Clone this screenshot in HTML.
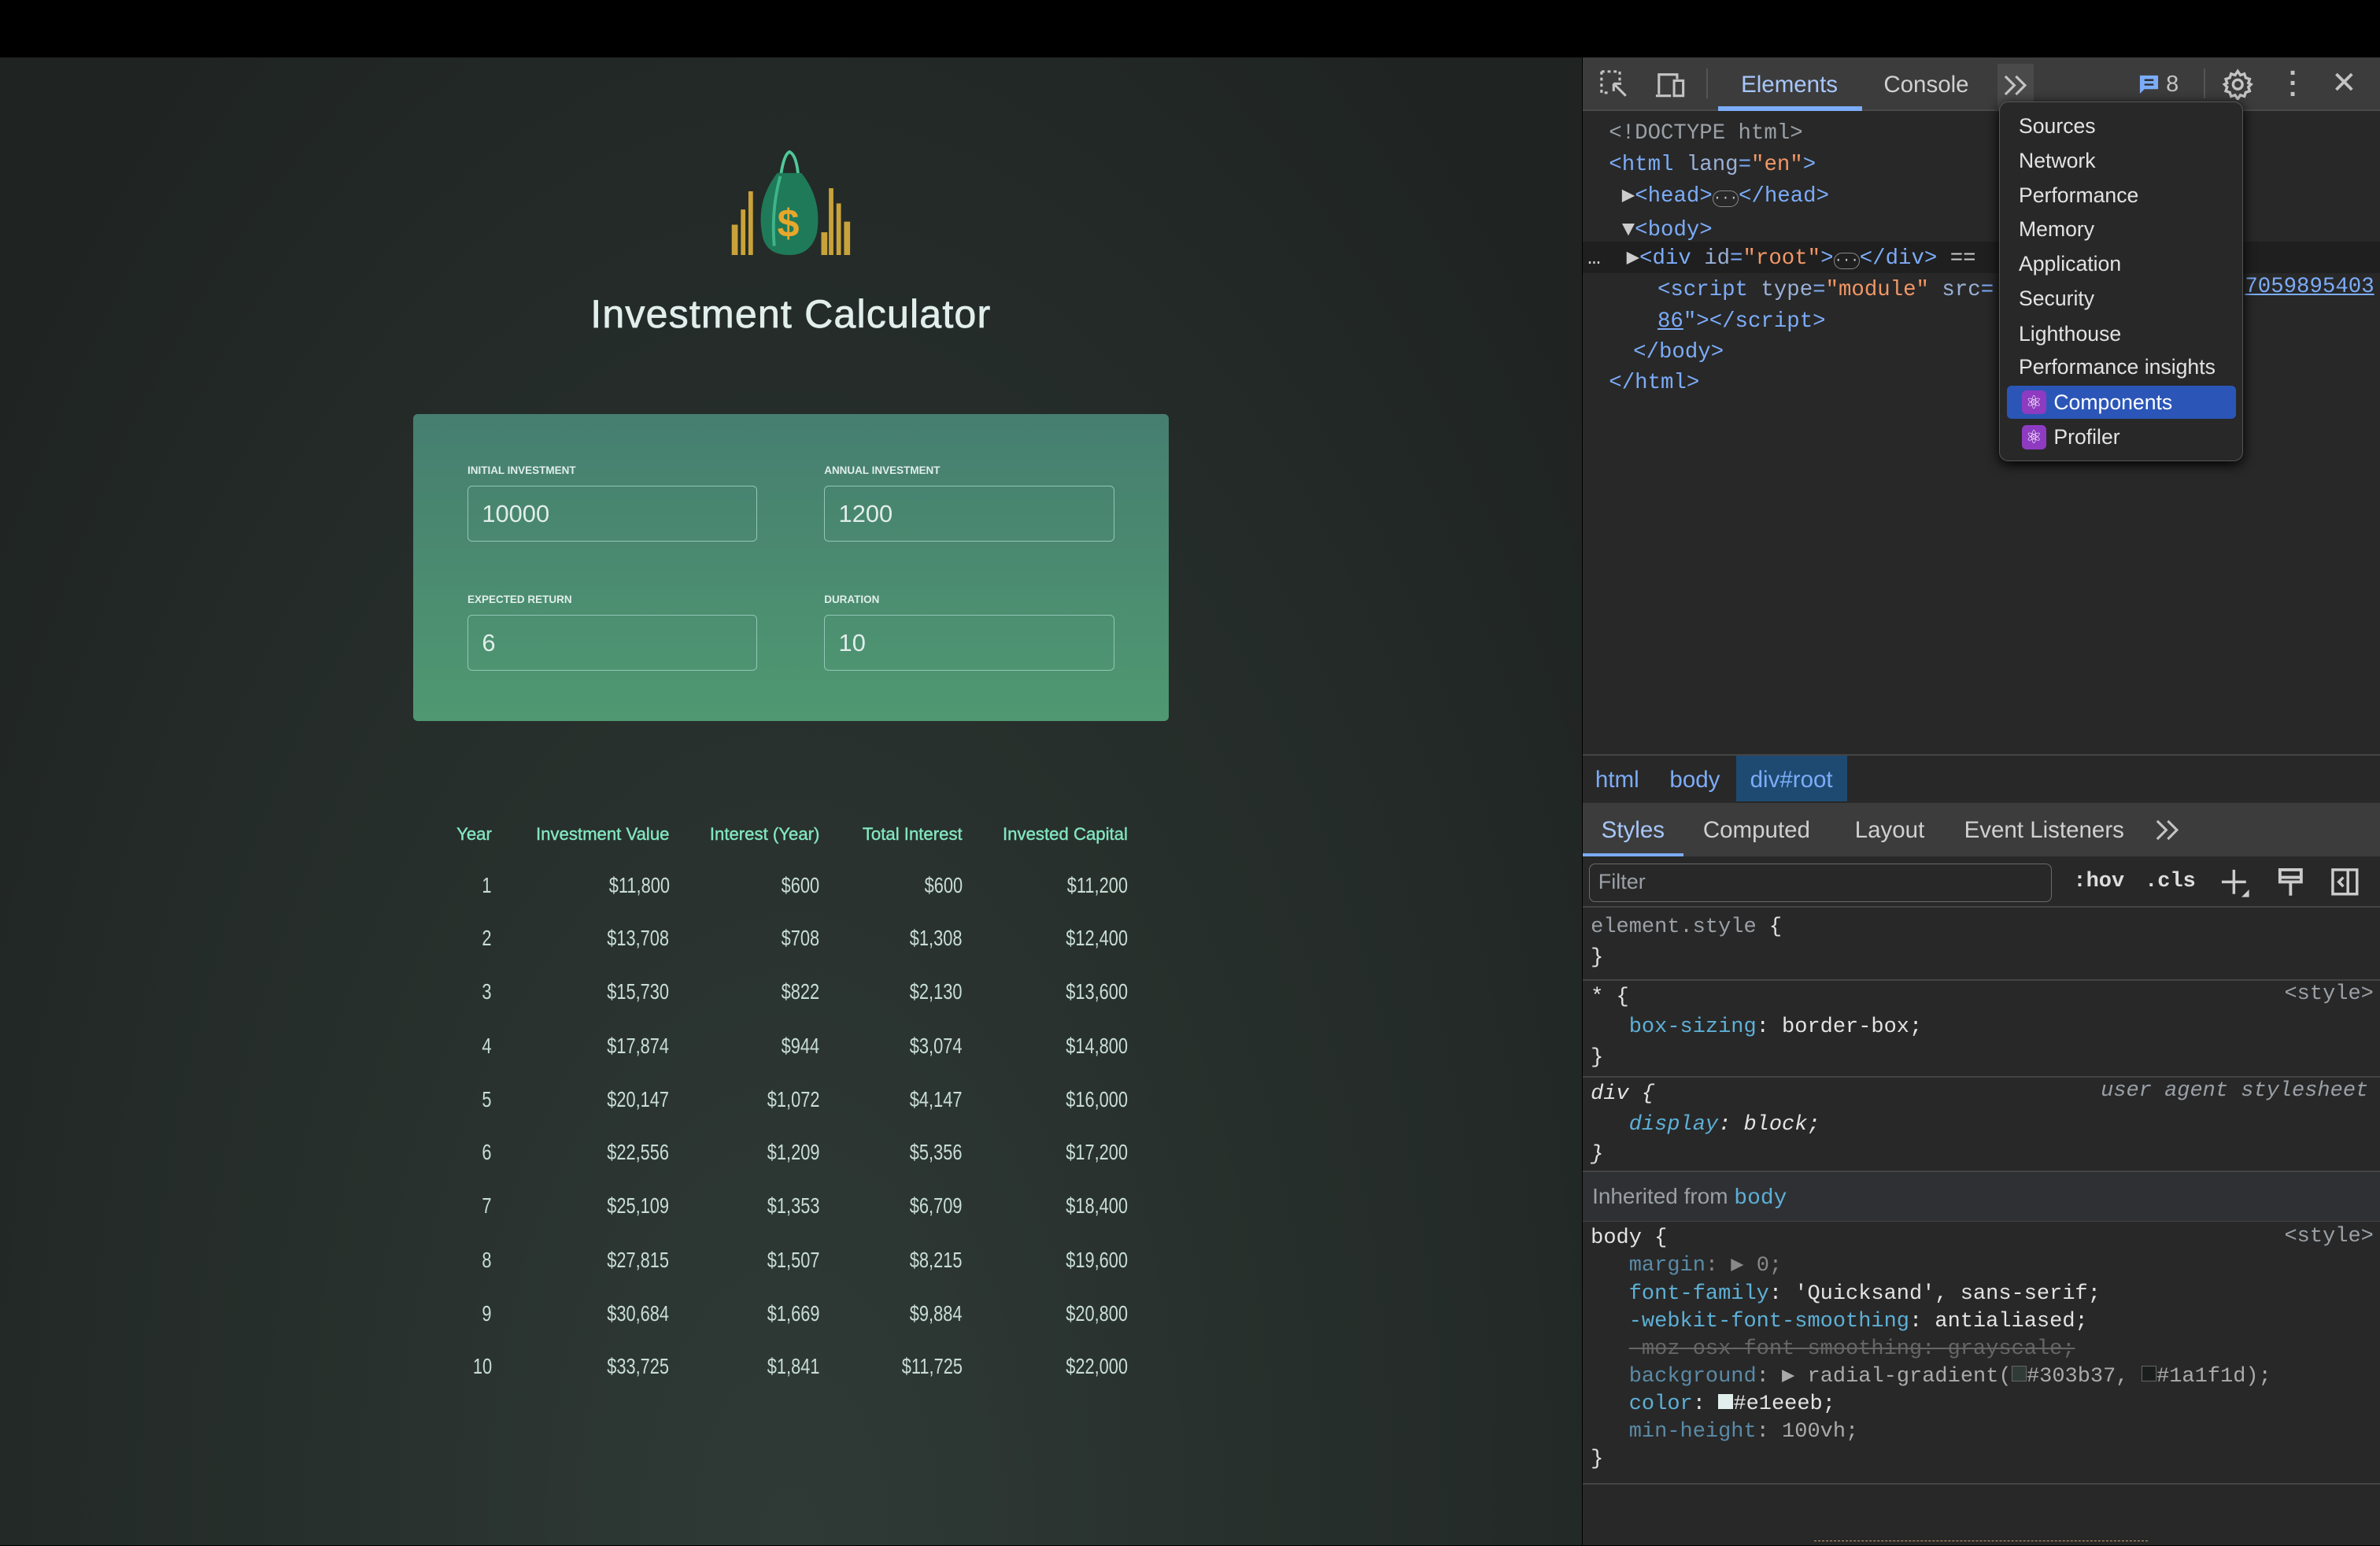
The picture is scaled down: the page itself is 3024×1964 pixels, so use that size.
<!DOCTYPE html>
<html><head><meta charset="utf-8">
<style>
html,body{margin:0;padding:0;background:#000;}
body{width:3024px;height:1964px;overflow:hidden;}
#w{zoom:1.92857;width:1568px;height:1018px;position:relative;font-family:"Liberation Sans",sans-serif;}
.a{position:absolute;}
#page{left:0;top:38px;width:1042px;height:980px;background:radial-gradient(ellipse at 50% 100%,#2f3a36,#1f2422 90%);}
.title{left:0;width:1042px;top:192px;text-align:center;color:#e1eeeb;font-size:26px;font-weight:normal;letter-spacing:0.6px;-webkit-text-stroke:0.4px #e1eeeb;}
.card{left:272px;top:273px;width:498px;height:202px;border-radius:3px;background:linear-gradient(180deg,#467e70,#4f9871);}
.lbl{font-size:7px;font-weight:bold;color:#e1eeeb;letter-spacing:0;}
.inp{width:191px;height:37px;border:1px solid #93c7b7;border-radius:3px;box-sizing:border-box;color:#e1eeeb;font-size:16px;padding:9px 0 0 9px;}
.th{color:#83e6c0;font-size:11.5px;top:543px;text-align:right;-webkit-text-stroke:0.2px #83e6c0;}
.td{color:#c8ddd6;font-size:14.5px;text-align:right;transform:scaleX(0.78);transform-origin:right;}
#dt{left:1043px;top:38px;width:525px;height:980px;background:#282828;}
.mono{font-family:"Liberation Mono",monospace;}
.tb{background:#3c3c3c;}
.menu{left:1317px;top:67px;width:160px;height:236px;background:#282828;border:1px solid #555;border-radius:6px;box-shadow:0 2px 8px #000;}
.mi{left:1330px;color:#e3e3e3;font-size:13.8px;}
.tag{color:#7cacf8}.atv{color:#f29766}.atn{color:#9ab0d6}
.sty{font-size:14px;color:#e3e3e3;}
.sep{left:1043px;width:525px;height:1px;background:#444;}
.prop{color:#5db0d7}
</style></head><body><div id="w">
<div class="a" id="page"></div>
<svg class="a" style="left:478px;top:98px" width="88" height="72" viewBox="0 0 88 72">
<g fill="#c9a23a"><rect x="4" y="50" width="4" height="20"/><rect x="10" y="40" width="3" height="30"/><rect x="15" y="28" width="3" height="42"/><rect x="68" y="26" width="3" height="44"/><rect x="73" y="36" width="3" height="34"/><rect x="78" y="48" width="4" height="22"/><rect x="63" y="55" width="4" height="15"/></g>
<path d="M36 20 Q38 4 42 2 Q47 4 48 20" fill="none" stroke="#4fc89a" stroke-width="2"/>
<path d="M34 16 L50 16 Q64 34 60 56 Q56 70 42 70 Q26 70 24 56 Q20 34 34 16Z" fill="#1f7a5a"/>
<path d="M36 18 Q30 40 32 64" stroke="#3fb488" stroke-width="2" fill="none"/>
<text x="34" y="58" font-size="26" font-weight="bold" fill="#e8a72a" font-family="Liberation Sans">$</text>
</svg>
<div class="a title">Investment Calculator</div>
<div class="a card"></div>
<div class="a lbl" style="left:308px;top:306px">INITIAL INVESTMENT</div>
<div class="a lbl" style="left:543px;top:306px">ANNUAL INVESTMENT</div>
<div class="a lbl" style="left:308px;top:391px">EXPECTED RETURN</div>
<div class="a lbl" style="left:543px;top:391px">DURATION</div>
<div class="a inp" style="left:308px;top:320px">10000</div>
<div class="a inp" style="left:543px;top:320px">1200</div>
<div class="a inp" style="left:308px;top:405px">6</div>
<div class="a inp" style="left:543px;top:405px">10</div>
<div class="a th" style="right:1244px">Year</div>
<div class="a th" style="right:1127px">Investment Value</div>
<div class="a th" style="right:1028px">Interest (Year)</div>
<div class="a th" style="right:934px">Total Interest</div>
<div class="a th" style="right:825px">Invested Capital</div>
<div class="a td" style="top:575px;right:1244px">1</div><div class="a td" style="top:575px;right:1127px">$11,800</div><div class="a td" style="top:575px;right:1028px">$600</div><div class="a td" style="top:575px;right:934px">$600</div><div class="a td" style="top:575px;right:825px">$11,200</div>
<div class="a td" style="top:610px;right:1244px">2</div><div class="a td" style="top:610px;right:1127px">$13,708</div><div class="a td" style="top:610px;right:1028px">$708</div><div class="a td" style="top:610px;right:934px">$1,308</div><div class="a td" style="top:610px;right:825px">$12,400</div>
<div class="a td" style="top:645px;right:1244px">3</div><div class="a td" style="top:645px;right:1127px">$15,730</div><div class="a td" style="top:645px;right:1028px">$822</div><div class="a td" style="top:645px;right:934px">$2,130</div><div class="a td" style="top:645px;right:825px">$13,600</div>
<div class="a td" style="top:681px;right:1244px">4</div><div class="a td" style="top:681px;right:1127px">$17,874</div><div class="a td" style="top:681px;right:1028px">$944</div><div class="a td" style="top:681px;right:934px">$3,074</div><div class="a td" style="top:681px;right:825px">$14,800</div>
<div class="a td" style="top:716px;right:1244px">5</div><div class="a td" style="top:716px;right:1127px">$20,147</div><div class="a td" style="top:716px;right:1028px">$1,072</div><div class="a td" style="top:716px;right:934px">$4,147</div><div class="a td" style="top:716px;right:825px">$16,000</div>
<div class="a td" style="top:751px;right:1244px">6</div><div class="a td" style="top:751px;right:1127px">$22,556</div><div class="a td" style="top:751px;right:1028px">$1,209</div><div class="a td" style="top:751px;right:934px">$5,356</div><div class="a td" style="top:751px;right:825px">$17,200</div>
<div class="a td" style="top:786px;right:1244px">7</div><div class="a td" style="top:786px;right:1127px">$25,109</div><div class="a td" style="top:786px;right:1028px">$1,353</div><div class="a td" style="top:786px;right:934px">$6,709</div><div class="a td" style="top:786px;right:825px">$18,400</div>
<div class="a td" style="top:822px;right:1244px">8</div><div class="a td" style="top:822px;right:1127px">$27,815</div><div class="a td" style="top:822px;right:1028px">$1,507</div><div class="a td" style="top:822px;right:934px">$8,215</div><div class="a td" style="top:822px;right:825px">$19,600</div>
<div class="a td" style="top:857px;right:1244px">9</div><div class="a td" style="top:857px;right:1127px">$30,684</div><div class="a td" style="top:857px;right:1028px">$1,669</div><div class="a td" style="top:857px;right:934px">$9,884</div><div class="a td" style="top:857px;right:825px">$20,800</div>
<div class="a td" style="top:892px;right:1244px">10</div><div class="a td" style="top:892px;right:1127px">$33,725</div><div class="a td" style="top:892px;right:1028px">$1,841</div><div class="a td" style="top:892px;right:934px">$11,725</div><div class="a td" style="top:892px;right:825px">$22,000</div>

<div class="a" id="dt"></div>
<div class="a tb" style="left:1043px;top:38px;width:525px;height:34px"></div>
<div class="a" style="left:1043px;top:72px;width:525px;height:1px;background:#4a4a4a"></div>
<svg class="a" style="left:1053px;top:45px" width="22" height="22" viewBox="0 0 22 22" fill="none" stroke="#c4c4c4" stroke-width="1.6"><path d="M2 2h12v6M2 2v14h6" stroke-dasharray="2 2"/><path d="M10 10l8 8M10 10h5M10 10v5"/></svg>
<svg class="a" style="left:1090px;top:45px" width="22" height="22" viewBox="0 0 22 22" fill="none" stroke="#c4c4c4" stroke-width="1.6"><path d="M3 17V4h12v3M1 18h10"/><rect x="13" y="8" width="6" height="10"/></svg>
<div class="a" style="left:1124px;top:45px;width:1px;height:20px;background:#555"></div>
<div class="a" style="left:1147px;top:47px;color:#a8c7fa;font-size:15.3px">Elements</div>
<div class="a" style="left:1132px;top:70px;width:95px;height:3px;background:#7cacf8"></div>
<div class="a" style="left:1241px;top:47px;color:#d0d0d0;font-size:15.3px">Console</div>
<div class="a" style="left:1316px;top:42px;width:24px;height:30px;background:#4a4a4a"></div>
<svg class="a" style="left:1319px;top:48px" width="18" height="16" viewBox="0 0 18 16" fill="none" stroke="#c4c4c4" stroke-width="1.6"><path d="M2 2l6 6-6 6M9 2l6 6-6 6"/></svg>
<svg class="a" style="left:1409px;top:49px" width="14" height="14" viewBox="0 0 14 14"><path d="M1 1h12v9H4l-3 3z" fill="#7cacf8"/><path d="M4 4h6M4 7h6" stroke="#282828" stroke-width="1.2"/></svg>
<div class="a" style="left:1427px;top:47px;color:#c4c4c4;font-size:15px">8</div>
<div class="a" style="left:1452px;top:45px;width:1px;height:20px;background:#555"></div>
<svg class="a" style="left:1464px;top:45px" width="21" height="21" viewBox="0 0 24 24" fill="none" stroke="#c4c4c4" stroke-width="2"><circle cx="12" cy="12" r="3.5"/><path d="M12 2l2 3 3-1 1 3 3 1-1 3 2 1-2 2 1 3-3 1-1 3-3-1-2 3-2-3-3 1-1-3-3-1 1-3-2-2 2-1-1-3 3-1 1-3 3 1z"/></svg>
<div class="a" style="left:1508px;top:45px;color:#c4c4c4;font-size:18px;line-height:7px;font-weight:bold">·<br>·<br>·</div>
<div class="a" style="left:1536px;top:43px;color:#c4c4c4;font-size:20px">✕</div>

<div class="a mono" style="left:1060px;top:78px;font-size:14.2px;line-height:20.7px;color:#9aa0a6;white-space:pre">&lt;!DOCTYPE html&gt;
<span class="tag">&lt;html <span class="atn">lang</span>=<span class="atv">"en"</span>&gt;</span>
 <span style="color:#ccc">▶</span><span class="tag">&lt;head&gt;</span><span style="border:1px solid #888;border-radius:7px;font-size:9px;color:#ccc">···</span><span class="tag">&lt;/head&gt;</span>
 <span style="color:#ccc">▼</span><span class="tag">&lt;body&gt;</span></div>
<div class="a" style="left:1043px;top:159px;width:525px;height:21px;background:#1f1f1f"></div>
<div class="a mono" style="left:1046px;top:160px;font-size:14.2px;line-height:20.7px;color:#ccc;white-space:pre">…  ▶<span class="tag">&lt;div <span class="atn">id</span>=<span class="atv">"root"</span>&gt;</span><span style="border:1px solid #888;border-radius:7px;font-size:9px">···</span><span class="tag">&lt;/div&gt;</span> ==</div>
<div class="a mono" style="left:1092px;top:181px;font-size:14.2px;line-height:20.7px;color:#7cacf8;white-space:pre">&lt;script <span class="atn">type</span>=<span class="atv">"module"</span> <span class="atn">src</span>=
<span style="text-decoration:underline">86</span>"&gt;&lt;/script&gt;</div>
<div class="a mono" style="left:1076px;top:222px;font-size:14.2px;line-height:20.7px;color:#7cacf8;white-space:pre">&lt;/body&gt;</div>
<div class="a mono" style="left:1060px;top:242px;font-size:14.2px;line-height:20.7px;color:#7cacf8;white-space:pre">&lt;/html&gt;</div>
<div class="a mono" style="left:1479px;top:181px;font-size:14.2px;color:#7cacf8;text-decoration:underline">7059895403</div>

<div class="a menu"></div>
<div class="a mi" style="top:75px">Sources</div>
<div class="a mi" style="top:98px">Network</div>
<div class="a mi" style="top:121px">Performance</div>
<div class="a mi" style="top:143px">Memory</div>
<div class="a mi" style="top:166px">Application</div>
<div class="a mi" style="top:189px">Security</div>
<div class="a mi" style="top:212px">Lighthouse</div>
<div class="a mi" style="top:234px">Performance insights</div>
<div class="a" style="left:1322px;top:254px;width:151px;height:22px;background:#2b56b8;border-radius:3px"></div>
<div class="a" style="left:1332px;top:257px;width:16px;height:16px;background:#8e3bc2;border-radius:3px;color:#fff;font-size:12px;text-align:center;line-height:16px">⚛</div>
<div class="a mi" style="left:1353px;top:257px;color:#fff">Components</div>
<div class="a" style="left:1332px;top:280px;width:16px;height:16px;background:#8e3bc2;border-radius:3px;color:#fff;font-size:12px;text-align:center;line-height:16px">⚛</div>
<div class="a mi" style="left:1353px;top:280px">Profiler</div>

<div class="a sep" style="top:497px"></div>
<div class="a" style="left:1144px;top:498px;width:73px;height:30px;background:#1e4a72"></div>
<div class="a" style="left:1051px;top:505px;color:#7cacf8;font-size:15.3px">html</div>
<div class="a" style="left:1100px;top:505px;color:#7cacf8;font-size:15.3px">body</div>
<div class="a" style="left:1153px;top:505px;color:#7cacf8;font-size:15.3px">div#root</div>
<div class="a tb" style="left:1043px;top:529px;width:525px;height:35px"></div>
<div class="a" style="left:1055px;top:538px;color:#a8c7fa;font-size:15.3px">Styles</div>
<div class="a" style="left:1043px;top:562px;width:66px;height:2px;background:#7cacf8"></div>
<div class="a" style="left:1122px;top:538px;color:#d0d0d0;font-size:15.3px">Computed</div>
<div class="a" style="left:1222px;top:538px;color:#d0d0d0;font-size:15.3px">Layout</div>
<div class="a" style="left:1294px;top:538px;color:#d0d0d0;font-size:15.3px">Event Listeners</div>
<svg class="a" style="left:1419px;top:539px" width="18" height="16" viewBox="0 0 18 16" fill="none" stroke="#c4c4c4" stroke-width="1.6"><path d="M2 2l6 6-6 6M9 2l6 6-6 6"/></svg>
<div class="a" style="left:1047px;top:569px;width:304px;height:24px;border:1px solid #6a6a6a;border-radius:4px"></div>
<div class="a" style="left:1053px;top:573px;color:#9aa0a6;font-size:14px">Filter</div>
<div class="a mono" style="left:1366px;top:573px;color:#ddd;font-size:14px;font-weight:bold">:hov</div>
<div class="a mono" style="left:1413px;top:573px;color:#ddd;font-size:14px;font-weight:bold">.cls</div>
<svg class="a" style="left:1463px;top:572px" width="20" height="20" viewBox="0 0 20 20" fill="none" stroke="#ccc" stroke-width="1.8"><path d="M9 1v16M1 9h16"/><path d="M19 14v5h-5z" fill="#ccc" stroke="none"/></svg>
<svg class="a" style="left:1500px;top:572px" width="18" height="20" viewBox="0 0 18 20" fill="none" stroke="#ccc" stroke-width="2"><rect x="2" y="1" width="14" height="8"/><path d="M2 6h14M9 9v9"/></svg>
<svg class="a" style="left:1536px;top:572px" width="18" height="18" viewBox="0 0 18 18" fill="none" stroke="#ccc" stroke-width="1.8"><rect x="1" y="1" width="16" height="16"/><path d="M11 1v16M8 6l-3 3 3 3"/></svg>
<div class="a sep" style="top:597px"></div>
<div class="a mono sty" style="left:1048px;top:601px;line-height:20px;white-space:pre"><span style="color:#9aa0a6">element.style</span> {
}</div>
<div class="a sep" style="top:645px"></div>
<div class="a mono sty" style="left:1048px;top:647px;line-height:20px;white-space:pre">* {
   <span class="prop">box-sizing</span>: border-box;
}</div>
<div class="a mono" style="left:1505px;top:647px;color:#9aa0a6;font-size:14px">&lt;style&gt;</div>
<div class="a sep" style="top:709px"></div>
<div class="a mono sty" style="left:1048px;top:711px;line-height:20px;white-space:pre;font-style:italic">div {
   <span class="prop">display</span>: block;
}</div>
<div class="a mono" style="left:1384px;top:711px;color:#9aa0a6;font-size:14px;font-style:italic">user agent stylesheet</div>
<div class="a sep" style="top:771px"></div>
<div class="a" style="left:1043px;top:772px;width:525px;height:32px;background:#2f3033"></div>
<div class="a" style="left:1049px;top:780px;color:#9aa0a6;font-size:14.5px">Inherited from <span class="mono" style="color:#5db0d7">body</span></div>
<div class="a sep" style="top:804px"></div>
<div class="a mono sty" style="left:1048px;top:807px;line-height:18.2px;white-space:pre">body {
   <span style="color:#5a8aa6">margin</span><span style="color:#888">: ▶ 0;</span>
   <span class="prop">font-family</span>: 'Quicksand', sans-serif;
   <span class="prop">-webkit-font-smoothing</span>: antialiased;
   <span style="color:#666;text-decoration:line-through">-moz-osx-font-smoothing: grayscale;</span>
   <span style="color:#5a8aa6">background</span><span style="color:#aaa">: ▶ radial-gradient(<span style="display:inline-block;width:9px;height:9px;background:#303b37;border:1px solid #666"></span>#303b37, <span style="display:inline-block;width:9px;height:9px;background:#1a1f1d;border:1px solid #666"></span>#1a1f1d);</span>
   <span class="prop">color</span>: <span style="display:inline-block;width:10px;height:10px;background:#e1eeeb"></span>#e1eeeb;
   <span style="color:#5a8aa6">min-height</span><span style="color:#aaa">: 100vh;</span>
}</div>
<div class="a mono" style="left:1505px;top:807px;color:#9aa0a6;font-size:14px">&lt;style&gt;</div>
<div class="a sep" style="top:977px"></div>
<div class="a" style="left:1195px;top:1015px;width:220px;height:3px;border-top:1px dashed #c8a070"></div>
</div></body></html>
